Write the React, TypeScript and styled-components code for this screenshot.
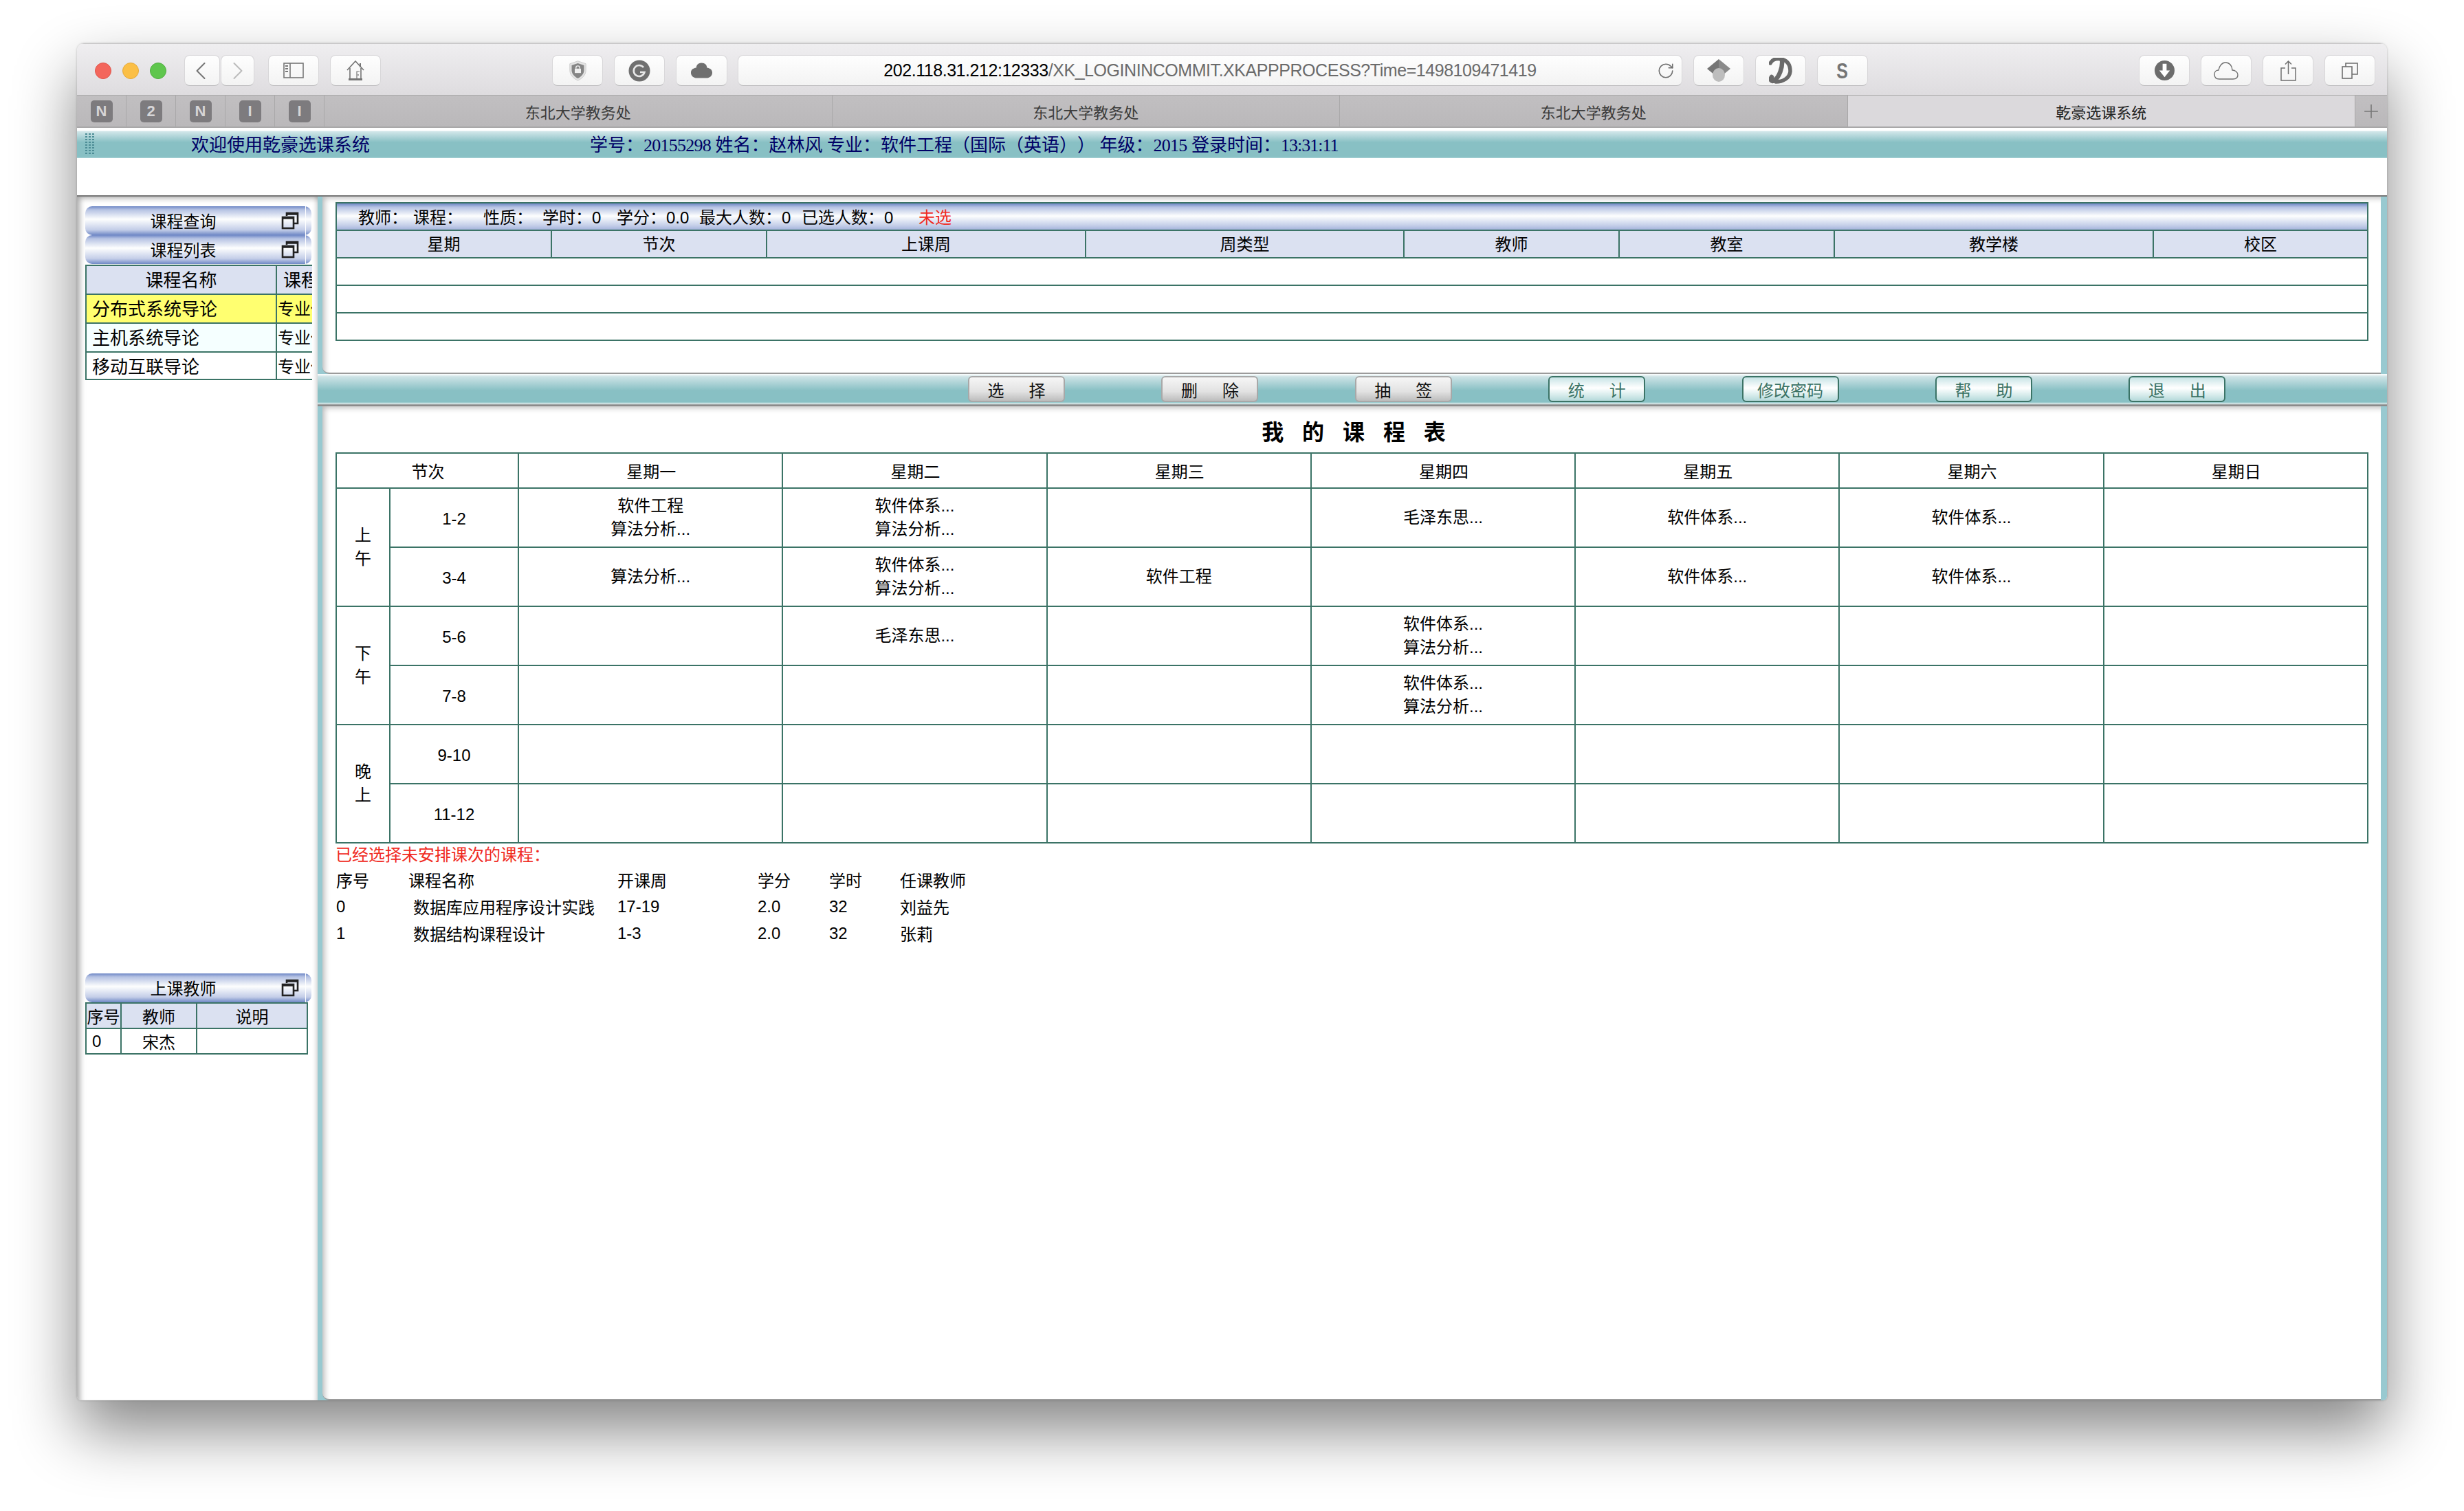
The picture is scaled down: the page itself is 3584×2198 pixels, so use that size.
import React from 'react';
import styled, { createGlobalStyle } from 'styled-components';
import { ChevronLeft, ChevronRight, RotateCw, Plus } from 'lucide-react';

const CJK = '"Liberation Sans", "Noto Sans CJK SC", sans-serif';
const SONG = '"Liberation Serif", "Noto Sans CJK SC", serif';
const LINE = '#3b7366';
const TEAL = '#88c0c4';

const GlobalStyle = createGlobalStyle`
  html, body {
    margin: 0;
    padding: 0;
    background: #fff;
  }
  body {
    font-family: ${CJK};
    color: #000;
  }
`;

const Page = styled.div`
  width: 3584px;
  height: 2198px;
  padding: 63px 112px 0;
  box-sizing: border-box;
  overflow: hidden;
`;

const Window = styled.div`
  width: 3360px;
  height: 1974px;
  display: flex;
  flex-direction: column;
  border-radius: 10px 10px 6px 6px;
  box-shadow: 0 44px 90px rgba(0, 0, 0, 0.48), 0 0 3px rgba(0, 0, 0, 0.25);
  overflow: hidden;
  background: #fff;
`;

const Toolbar = styled.div`
  height: 75px;
  flex: none;
  box-sizing: border-box;
  display: flex;
  align-items: flex-start;
  padding: 16px 16px 0 26px;
  background: linear-gradient(#efeef0, #dedcdf);
  border-top: 1px solid #c6c5c6;
`;

const Lights = styled.div`
  display: flex;
  gap: 16px;
  margin: 11px 26px 0 0;
`;

const Light = styled.span<{ $color: string; $edge: string }>`
  width: 24px;
  height: 24px;
  border-radius: 50%;
  background: ${({ $color }) => $color};
  border: 1px solid ${({ $edge }) => $edge};
  box-sizing: border-box;
`;

const ToolGroup = styled.div<{ $left: number; $gap?: number }>`
  display: flex;
  gap: ${({ $gap }) => $gap ?? 16}px;
  margin-left: ${({ $left }) => $left}px;
`;

const ToolButton = styled.div<{ $width: number }>`
  width: ${({ $width }) => $width}px;
  height: 45px;
  box-sizing: border-box;
  display: flex;
  align-items: center;
  justify-content: center;
  border-radius: 8px;
  background: linear-gradient(#fefefe, #f3f3f3);
  border: 1px solid #d8d7d9;
  border-bottom-color: #bdbcbe;
  color: #747474;
`;

const BackChevron = styled(ChevronLeft)`
  margin-right: 5px;
`;

const ToolLetter = styled.span`
  display: inline-block;
  font-size: 32px;
  font-weight: 700;
  line-height: 1;
  color: #757575;
  transform: scaleX(0.78);
`;

const AddressBar = styled(ToolButton)`
  position: relative;
  font-size: 25px;
  letter-spacing: -0.45px;
  color: #6b6b6b;
  white-space: nowrap;
`;

const Host = styled.span`
  color: #000;
`;

const Reload = styled.span`
  position: absolute;
  right: 10px;
  top: 9px;
  display: flex;
  color: #6f6f6f;
`;

const TabBar = styled.div`
  height: 48px;
  flex: none;
  box-sizing: border-box;
  display: flex;
  background: linear-gradient(#c1bfc1, #bab8ba);
  border-top: 1px solid #a9a8a9;
  border-bottom: 2px solid #a9a8a9;
`;

const PinTab = styled.div`
  width: 72px;
  box-sizing: border-box;
  display: flex;
  align-items: center;
  justify-content: center;
  border-right: 1px solid #a9a8a9;
`;

const PinBadge = styled.span`
  width: 32px;
  height: 32px;
  border-radius: 5px;
  background: #7d7b7e;
  color: #d6d5d7;
  font-size: 22px;
  font-weight: 700;
  line-height: 32px;
  text-align: center;
`;

const Tab = styled.div<{ $active?: boolean }>`
  width: 738.5px;
  box-sizing: border-box;
  display: flex;
  align-items: center;
  justify-content: center;
  font-size: 22px;
  color: ${({ $active }) => ($active ? '#222' : '#3c3c3c')};
  background: ${({ $active }) => ($active ? '#dbd9dc' : 'transparent')};
  border-right: 1px solid #a9a8a9;
`;

const NewTab = styled.div`
  flex: 1;
  display: flex;
  align-items: center;
  justify-content: center;
  color: #777;
`;

const Banner = styled.div`
  height: 43px;
  flex: none;
  margin-top: 1px;
  display: flex;
  align-items: center;
  padding-left: 11px;
  font-family: ${SONG};
  font-size: 26px;
  color: #000066;
  white-space: nowrap;
  text-spacing-trim: space-all;
  background: linear-gradient(#fff 0, #fff 3px, #d3e7ea 4px, ${TEAL} 20px, ${TEAL} 41px, #a9d2d6 43px);
`;

const Grip = styled.span`
  width: 16px;
  height: 32px;
  margin-right: 139px;
  background-image: radial-gradient(#4d8d96 1.3px, transparent 1.6px);
  background-size: 5px 4px;
`;

const BannerTitle = styled.span`
  width: 580px;
  flex: none;
`;

const Digits = styled.span`
  letter-spacing: -0.75px;
`;

const Clock = styled.span`
  letter-spacing: -1px;
`;

const BannerGap = styled.div`
  height: 54px;
  flex: none;
  background: #fff;
`;

const Workspace = styled.div`
  flex: 1;
  min-height: 0;
  display: flex;
  border-top: 2px solid #777;
`;

const Sidebar = styled.aside`
  width: 350px;
  flex: none;
  box-sizing: border-box;
  padding: 14px 0 0 12px;
  background: #fff;
  box-shadow: inset 10px 8px 8px -6px rgba(0, 0, 0, 0.35), inset -6px 0 6px -4px rgba(0, 0, 0, 0.2);
`;

const PanelHead = styled.div`
  width: 329px;
  height: 42px;
  box-sizing: border-box;
  display: flex;
  align-items: center;
  border-radius: 10px;
  font-size: 24px;
  background: linear-gradient(#6f88c6 0, #b5c2e3 12%, #fdfefe 45%, #c3cde8 82%, #6f88c6 100%);
  position: relative;

  &::after {
    content: '';
    position: absolute;
    left: 320px;
    top: 0;
    bottom: 0;
    width: 1px;
    background: #fff;
  }
`;

const PanelLabel = styled.span`
  flex: 1;
  text-align: center;
  padding-bottom: 2px;
`;

const RestoreIcon = styled.svg`
  width: 26px;
  height: 26px;
  margin-right: 18px;
  flex: none;
`;

const CourseList = styled.div`
  width: 330px;
  overflow: hidden;
  margin-top: 1px;
`;

const CourseRow = styled.div<{ $bg: string; $last?: boolean }>`
  width: 400px;
  height: 42px;
  box-sizing: border-box;
  display: grid;
  grid-template-columns: 277px 1fr;
  align-items: center;
  border: solid ${LINE};
  border-width: 2px 2px ${({ $last }) => ($last ? '2px' : '0')} 2px;
  background: ${({ $bg }) => $bg};
  white-space: nowrap;
`;

const CourseName = styled.span<{ $center?: boolean }>`
  height: 100%;
  box-sizing: border-box;
  display: flex;
  align-items: center;
  justify-content: ${({ $center }) => ($center ? 'center' : 'flex-start')};
  padding: 0 0 3px ${({ $center }) => ($center ? 0 : 8)}px;
  font-size: 26px;
  border-right: 2px solid ${LINE};
`;

const CourseKind = styled.span<{ $head?: boolean }>`
  font-size: ${({ $head }) => ($head ? 26 : 24)}px;
  padding: 0 0 3px ${({ $head }) => ($head ? 9 : 1)}px;
`;

const TeacherBlock = styled.div`
  margin-top: 863px;
`;

const TeacherGrid = styled.div`
  width: 324px;
  box-sizing: border-box;
  display: grid;
  grid-template-columns: 51px 110px 1fr;
  border: solid ${LINE};
  border-width: 2px 2px 0 2px;
`;

const TeacherCell = styled.span<{ $head?: boolean; $left?: boolean }>`
  height: 35px;
  display: flex;
  align-items: center;
  justify-content: ${({ $left }) => ($left ? 'flex-start' : 'center')};
  padding-left: ${({ $left }) => ($left ? 8 : 0)}px;
  font-size: 24px;
  background: ${({ $head }) => ($head ? '#dbe1f1' : '#fff')};
  border-right: 2px solid ${LINE};
  border-bottom: 2px solid ${LINE};

  &:nth-child(3n) {
    border-right: 0;
  }
`;

const Main = styled.main`
  flex: 1;
  min-width: 0;
  display: flex;
  flex-direction: column;
  background: #98c9d0;
`;

const Sheet = styled.section<{ $grow?: boolean }>`
  margin: 0 9px 0 7px;
  background: #fff;
  box-sizing: border-box;
  ${({ $grow }) => ($grow ? 'flex: 1; min-height: 0;' : 'height: 258px;')}
  padding: ${({ $grow }) => ($grow ? '0 18px 0 19px' : '8px 18px 0 19px')};
  border-bottom: 2px solid #9b9b9b;
  border-bottom-left-radius: 10px;
  box-shadow: inset 9px 8px 8px -6px rgba(0, 0, 0, 0.28);
`;

const InfoBar = styled.div`
  height: 40px;
  box-sizing: border-box;
  display: flex;
  align-items: center;
  padding: 0 0 2px 31px;
  font-size: 24px;
  white-space: nowrap;
  border: solid ${LINE};
  border-width: 2px 2px 0 2px;
  background: linear-gradient(#6f88c6 0, #b5c2e3 14%, #fdfefe 48%, #c3cde8 85%, #a5b4dc 100%);
`;

const InfoItem = styled.span<{ $width?: number; $red?: boolean }>`
  width: ${({ $width }) => ($width ? `${$width}px` : 'auto')};
  color: ${({ $red }) => ($red ? '#f02a22' : '#000')};
`;

const DetailTable = styled.table`
  width: 100%;
  table-layout: fixed;
  border-collapse: collapse;
  font-size: 24px;

  th {
    height: 35px;
    font-weight: 400;
    background: #dbe1f1;
    border: 2px solid ${LINE};
    padding: 0 0 3px;
  }
  td {
    height: 38px;
    border: 2px solid ${LINE};
    padding: 0;
  }
`;

const Band = styled.div`
  height: 47px;
  flex: none;
  box-sizing: border-box;
  padding: 3px 0 0 946px;
  display: flex;
  gap: 140.4px;
  background: linear-gradient(#fff 0, #cde3e6 4px, ${TEAL} 24px, ${TEAL} 41px, #dff0f1 43px, #8b8b8b 45px, #8b8b8b 47px);
`;

const ActionButton = styled.div<{ $on?: boolean; $tight?: boolean }>`
  width: 141px;
  height: 38px;
  flex: none;
  box-sizing: border-box;
  display: flex;
  align-items: center;
  justify-content: center;
  border-radius: 6px;
  font-size: 24px;
  white-space: nowrap;
  letter-spacing: ${({ $tight }) => ($tight ? 0 : 36)}px;
  text-indent: ${({ $tight }) => ($tight ? 0 : 36)}px;
  color: ${({ $on }) => ($on ? '#3b7366' : '#111')};
  border: 2px solid ${({ $on }) => ($on ? LINE : '#a8a8a8')};
  background: ${({ $on }) =>
    $on
      ? 'linear-gradient(#c8e4e6, #fff 45%, #d7ecec 75%, #b5d9da)'
      : 'linear-gradient(#f6f6f6, #e2e2e2 60%, #bdbdbd)'};
`;

const ScheduleTitle = styled.h1`
  margin: 0;
  height: 67px;
  box-sizing: border-box;
  padding: 16px 0 0 5px;
  text-align: center;
  font-size: 32px;
  font-weight: 700;
  line-height: 44px;
  word-spacing: 18px;
`;

const Schedule = styled.table`
  width: 2957px;
  table-layout: fixed;
  border-collapse: collapse;
  font-size: 24px;
  text-align: center;

  th {
    height: 49px;
    font-weight: 400;
    border: 2px solid ${LINE};
    padding: 0 0 0 2px;
  }
  td {
    height: 84px;
    line-height: 34px;
    border: 2px solid ${LINE};
    padding: 0;
  }
`;

const SlotCell = styled.td`
  && {
    padding-top: 4px;
    height: 80px;
  }
`;

const UnplacedTitle = styled.div`
  margin-top: -1px;
  height: 35px;
  line-height: 35px;
  font-size: 24px;
  color: #f02a22;
`;

const Unplaced = styled.div`
  display: grid;
  grid-template-columns: 105px 304px 204px 104px 103px 1fr;
  grid-auto-rows: 39px;
  align-items: center;
  font-size: 24px;
  margin-top: -1px;
  padding-left: 1px;
`;

const UnplacedName = styled.span<{ $indent?: boolean }>`
  padding-left: ${({ $indent }) => ($indent ? 7 : 0)}px;
`;

const DAYS = ['星期一', '星期二', '星期三', '星期四', '星期五', '星期六', '星期日'];
const ARCH = '软件体系...';
const ALGO = '算法分析...';
const MAO = '毛泽东思...';
const SE = '软件工程';

const ROWS: { slot: string; cells: string[][] }[] = [
  { slot: '1-2', cells: [[SE, ALGO], [ARCH, ALGO], [], [MAO], [ARCH], [ARCH], []] },
  { slot: '3-4', cells: [[ALGO], [ARCH, ALGO], [SE], [], [ARCH], [ARCH], []] },
  { slot: '5-6', cells: [[], [MAO], [], [ARCH, ALGO], [], [], []] },
  { slot: '7-8', cells: [[], [], [], [ARCH, ALGO], [], [], []] },
  { slot: '9-10', cells: [[], [], [], [], [], [], []] },
  { slot: '11-12', cells: [[], [], [], [], [], [], []] },
];

const PERIODS = ['上午', '下午', '晚上'];

const COURSES = [
  { name: '分布式系统导论', bg: '#ffff70' },
  { name: '主机系统导论', bg: '#f5ffff' },
  { name: '移动互联导论', bg: '#fff' },
];

const ACTIONS = [
  { label: '选择' },
  { label: '删除' },
  { label: '抽签' },
  { label: '统计', on: true },
  { label: '修改密码', on: true, tight: true },
  { label: '帮助', on: true },
  { label: '退出', on: true },
];

const UNPLACED = [
  ['0', '数据库应用程序设计实践', '17-19', '2.0', '32', '刘益先'],
  ['1', '数据结构课程设计', '1-3', '2.0', '32', '张莉'],
];

function Restore() {
  return (
    <RestoreIcon viewBox="0 0 26 26" fill="none" stroke="#222" strokeWidth="2.6">
      <path d="M8 6V2h16v15h-6" />
      <rect x="2" y="8" width="16" height="16" />
      <path d="M2 9h16M8 3h16" strokeWidth="3.4" />
    </RestoreIcon>
  );
}

function ShieldIcon() {
  return (
    <svg width="27" height="30" viewBox="0 0 30 38" preserveAspectRatio="none">
      <path d="M15 1 28 6v12c0 9-6 15-13 19C8 33 2 27 2 18V6z" fill="#e4e4e4" stroke="#c9c9c9" />
      <path d="M15 5 25 9v9c0 7-5 12-10 15C10 30 5 25 5 18V9z" fill="#858585" />
      <rect x="10" y="15" width="10" height="8" fill="#eee" />
      <path d="M12 15v-2a3 3 0 0 1 6 0v2" fill="none" stroke="#eee" strokeWidth="1.6" />
    </svg>
  );
}

function GrammarlyIcon() {
  return (
    <svg width="32" height="32" viewBox="0 0 32 32">
      <circle cx="16" cy="16" r="15.5" fill="#707070" />
      <path d="M22 11a8 8 0 1 0 1.5 7H17" fill="none" stroke="#e8e8e8" strokeWidth="2.6" />
    </svg>
  );
}

function SolidCloudIcon() {
  return (
    <svg width="33" height="25" viewBox="0 0 34 32" preserveAspectRatio="none">
      <path d="M17 2c5 0 8 4 8 9 5 1 8 4 8 9 0 6-4 10-9 10H10C5 30 1 26 1 20c0-5 3-8 8-9 0-5 3-9 8-9z" fill="#6f6f6f" />
    </svg>
  );
}

function DiamondIcon() {
  return (
    <svg width="34" height="33" viewBox="0 0 34 33">
      <path d="M17 0 0 14l17 14z" fill="#757575" />
      <path d="M17 0l17 14-17 14z" fill="#8a8a8a" />
      <ellipse cx="17" cy="23" rx="9" ry="10" fill="#bdbdbd" />
    </svg>
  );
}

function ScriptDIcon() {
  return (
    <svg width="34" height="38" viewBox="0 0 34 38" fill="none" stroke="#6a6a6a" strokeLinecap="round">
      <path d="M2 8C5 2 12 1 18 2c10 2 13 10 13 18-1 10-11 15-21 15" strokeWidth="5.5" />
      <path d="M19 4c1 10-4 24-11 29-4 3-7-1-4-5" strokeWidth="6.5" />
    </svg>
  );
}

function DownloadIcon() {
  return (
    <svg width="29" height="29" viewBox="0 0 30 30">
      <circle cx="15" cy="15" r="15" fill="#6c6c6c" />
      <path d="M12 5h6v10h5l-8 10-8-10h5z" fill="#fff" />
    </svg>
  );
}

function SidebarIcon() {
  return (
    <svg width="30" height="23" viewBox="0 0 30 23" fill="none" stroke="#777" strokeWidth="1.6">
      <rect x="1" y="1" width="28" height="21" />
      <path d="M10 1v21" />
      <path d="M3 5h4M3 9h4M3 13h4" strokeWidth="2" />
    </svg>
  );
}

function HomeIcon() {
  return (
    <svg width="26" height="29" viewBox="0 0 26 29" fill="none" stroke="#747474" strokeWidth="1.6">
      <path d="M1 14 13 1l12 13" />
      <path d="M20 4v6" strokeWidth="2" />
      <path d="M5 11v15M21 11v15" />
      <path d="M3 27.5h20" strokeWidth="3" />
      <path d="M15 26V16h4" strokeWidth="1.2" />
      <circle cx="17" cy="21" r="0.9" fill="#747474" stroke="none" />
    </svg>
  );
}

function CloudOutlineIcon() {
  return (
    <svg width="36" height="26" viewBox="0 0 36 26" fill="none" stroke="#6f6f6f" strokeWidth="1.4">
      <path d="M8 25C3 25 1 22 1 18c0-4 3-6 6-6C8 6 12 1 17 1c6 0 10 5 10 11 4 0 8 3 8 7 0 4-3 6-7 6z" />
    </svg>
  );
}

function ShareIcon() {
  return (
    <svg width="23" height="30" viewBox="0 0 23 30" fill="none" stroke="#6f6f6f" strokeWidth="1.5">
      <path d="M7 11H1v18h21V11h-6" />
      <path d="M11.5 1v19M7 5.5 11.5 1 16 5.5" />
    </svg>
  );
}

function TabsIcon() {
  return (
    <svg width="24" height="24" viewBox="0 0 24 24" fill="none" stroke="#6f6f6f" strokeWidth="1.6">
      <rect x="1" y="6" width="14" height="17" />
      <path d="M6 6V1h17v16h-8" />
    </svg>
  );
}

export default function App() {
  return (
    <>
      <GlobalStyle />
      <Page>
        <Window>
          <Toolbar>
            <Lights>
              <Light $color="#f3665c" $edge="#e0554b" />
              <Light $color="#fbbf46" $edge="#e5a93a" />
              <Light $color="#5fc64d" $edge="#50ae41" />
            </Lights>
            <ToolGroup $left={0} $gap={1}>
              <ToolButton $width={52}><BackChevron size={44} strokeWidth={1.1} /></ToolButton>
              <ToolButton $width={49}><ChevronRight size={44} strokeWidth={1.1} color="#bbb" /></ToolButton>
            </ToolGroup>
            <ToolGroup $left={20}>
              <ToolButton $width={74}><SidebarIcon /></ToolButton>
              <ToolButton $width={74}><HomeIcon /></ToolButton>
            </ToolGroup>
            <ToolGroup $left={249}>
              <ToolButton $width={74}><ShieldIcon /></ToolButton>
              <ToolButton $width={74}><GrammarlyIcon /></ToolButton>
              <ToolButton $width={75}><SolidCloudIcon /></ToolButton>
            </ToolGroup>
            <ToolGroup $left={15}>
              <AddressBar $width={1374}>
                <span>
                  <Host>202.118.31.212:12333</Host>/XK_LOGININCOMMIT.XKAPPPROCESS?Time=1498109471419
                </span>
                <Reload><RotateCw size={26} strokeWidth={1.5} /></Reload>
              </AddressBar>
              <ToolButton $width={74}><DiamondIcon /></ToolButton>
              <ToolButton $width={74}><ScriptDIcon /></ToolButton>
              <ToolButton $width={74}><ToolLetter>S</ToolLetter></ToolButton>
            </ToolGroup>
            <ToolGroup $left={394}>
              <ToolButton $width={74}><DownloadIcon /></ToolButton>
              <ToolButton $width={74}><CloudOutlineIcon /></ToolButton>
              <ToolButton $width={74}><ShareIcon /></ToolButton>
              <ToolButton $width={74}><TabsIcon /></ToolButton>
            </ToolGroup>
          </Toolbar>

          <TabBar>
            {['N', '2', 'N', 'I', 'I'].map((pin, i) => (
              <PinTab key={i}><PinBadge>{pin}</PinBadge></PinTab>
            ))}
            <Tab>东北大学教务处</Tab>
            <Tab>东北大学教务处</Tab>
            <Tab>东北大学教务处</Tab>
            <Tab $active>乾豪选课系统</Tab>
            <NewTab><Plus size={32} strokeWidth={1.2} /></NewTab>
          </TabBar>

          <Banner>
            <Grip />
            <BannerTitle>欢迎使用乾豪选课系统</BannerTitle>
            <span>
              学号：<Digits>20155298</Digits> 姓名：赵林风 专业：软件工程（国际（英语）） 年级：<Digits>2015</Digits> 登录时间：<Clock>13:31:11</Clock>
            </span>
          </Banner>
          <BannerGap />

          <Workspace>
            <Sidebar>
              <PanelHead><PanelLabel>课程查询</PanelLabel><Restore /></PanelHead>
              <PanelHead><PanelLabel>课程列表</PanelLabel><Restore /></PanelHead>
              <CourseList>
                <CourseRow $bg="#dbe1f1">
                  <CourseName $center>课程名称</CourseName>
                  <CourseKind $head>课程性质</CourseKind>
                </CourseRow>
                {COURSES.map((course, i) => (
                  <CourseRow key={course.name} $bg={course.bg} $last={i === COURSES.length - 1}>
                    <CourseName>{course.name}</CourseName>
                    <CourseKind>专业任选</CourseKind>
                  </CourseRow>
                ))}
              </CourseList>

              <TeacherBlock>
                <PanelHead><PanelLabel>上课教师</PanelLabel><Restore /></PanelHead>
                <TeacherGrid>
                  <TeacherCell $head>序号</TeacherCell>
                  <TeacherCell $head>教师</TeacherCell>
                  <TeacherCell $head>说明</TeacherCell>
                  <TeacherCell $left>0</TeacherCell>
                  <TeacherCell>宋杰</TeacherCell>
                  <TeacherCell />
                </TeacherGrid>
              </TeacherBlock>
            </Sidebar>

            <Main>
              <Sheet>
                <InfoBar>
                  <InfoItem $width={80}>教师：</InfoItem>
                  <InfoItem $width={102}>课程：</InfoItem>
                  <InfoItem $width={86}>性质：</InfoItem>
                  <InfoItem $width={108}>学时：0</InfoItem>
                  <InfoItem $width={120}>学分：0.0</InfoItem>
                  <InfoItem $width={149}>最大人数：0</InfoItem>
                  <InfoItem $width={170}>已选人数：0</InfoItem>
                  <InfoItem $red>未选</InfoItem>
                </InfoBar>
                <DetailTable>
                  <colgroup>
                    <col style={{ width: 313 }} />
                    <col style={{ width: 313 }} />
                    <col style={{ width: 464 }} />
                    <col style={{ width: 463 }} />
                    <col style={{ width: 313 }} />
                    <col style={{ width: 313 }} />
                    <col style={{ width: 464 }} />
                    <col />
                  </colgroup>
                  <thead>
                    <tr>
                      {['星期', '节次', '上课周', '周类型', '教师', '教室', '教学楼', '校区'].map((h) => (
                        <th key={h}>{h}</th>
                      ))}
                    </tr>
                  </thead>
                  <tbody>
                    {[0, 1, 2].map((r) => (
                      <tr key={r}>
                        <td colSpan={8} />
                      </tr>
                    ))}
                  </tbody>
                </DetailTable>
              </Sheet>

              <Band>
                {ACTIONS.map((a) => (
                  <ActionButton key={a.label} $on={a.on} $tight={a.tight}>{a.label}</ActionButton>
                ))}
              </Band>

              <Sheet $grow>
                <ScheduleTitle>我 的 课 程 表</ScheduleTitle>
                <Schedule>
                  <colgroup>
                    <col style={{ width: 78 }} />
                    <col style={{ width: 187 }} />
                    {DAYS.map((d) => <col key={d} />)}
                  </colgroup>
                  <thead>
                    <tr>
                      <th colSpan={2}>节次</th>
                      {DAYS.map((d) => <th key={d}>{d}</th>)}
                    </tr>
                  </thead>
                  <tbody>
                    {ROWS.map((row, r) => (
                      <tr key={row.slot}>
                        {r % 2 === 0 && (
                          <td rowSpan={2}>
                            {PERIODS[r / 2][0]}
                            <br />
                            {PERIODS[r / 2][1]}
                          </td>
                        )}
                        <SlotCell>{row.slot}</SlotCell>
                        {row.cells.map((lines, c) => (
                          <td key={c}>
                            {lines.map((line, l) => (
                              <React.Fragment key={l}>
                                {l > 0 && <br />}
                                {line}
                              </React.Fragment>
                            ))}
                          </td>
                        ))}
                      </tr>
                    ))}
                  </tbody>
                </Schedule>
                <UnplacedTitle>已经选择未安排课次的课程：</UnplacedTitle>
                <Unplaced>
                  {['序号', '课程名称', '开课周', '学分', '学时', '任课教师'].map((h) => (
                    <span key={h}>{h}</span>
                  ))}
                  {UNPLACED.map((row) =>
                    row.map((v, i) => (
                      <UnplacedName key={v + i} $indent={i === 1}>{v}</UnplacedName>
                    )),
                  )}
                </Unplaced>
              </Sheet>
            </Main>
          </Workspace>
        </Window>
      </Page>
    </>
  );
}
